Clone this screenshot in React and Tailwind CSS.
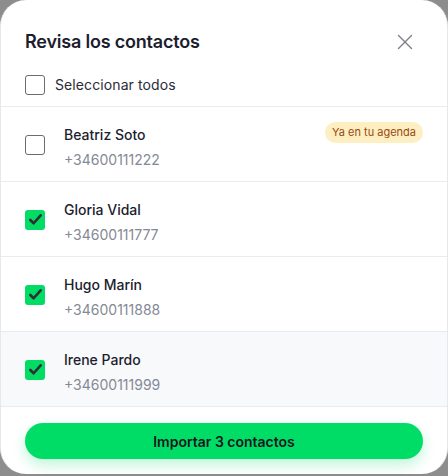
import React, { useState } from "react";

const contacts = [
  { id: 1, name: "Beatriz Soto", phone: "+34600111222", existing: true, checked: false },
  { id: 2, name: "Gloria Vidal", phone: "+34600111777", checked: true },
  { id: 3, name: "Hugo Marín", phone: "+34600111888", checked: true },
  { id: 4, name: "Irene Pardo", phone: "+34600111999", checked: true, hover: true },
];

function Check({ checked }) {
  return checked ? (
    <div className="w-5 h-5 rounded-[3px] bg-[#00dc64] flex items-center justify-center">
      <svg viewBox="0 0 16 16" className="w-[15px] h-[15px]" fill="none">
        <path d="M2.5 8.5l3.5 3.5 7.5-8.5" stroke="#303036" strokeWidth="2.8" strokeLinecap="round" strokeLinejoin="round" />
      </svg>
    </div>
  ) : (
    <div className="w-5 h-5 rounded-[3px] border border-[#6b6b72] bg-white" />
  );
}

export default function App() {
  const [list] = useState(contacts);
  const count = list.filter((c) => c.checked).length;

  return (
    <div className="w-[448px] h-[476px] bg-[#8d8d8d] overflow-hidden" style={{ fontFamily: "Inter, 'Noto Sans', sans-serif" }}>
      <div className="w-[448px] h-[474px] bg-white rounded-[26px] border-x border-[#e6e8ec] flex flex-col">
        <div className="flex items-center justify-between pl-6 pr-[34px] pt-[30px]">
          <h2 className="text-[18px] leading-6 font-semibold text-[#1c1d2e] tracking-[-0.2px]">Revisa los contactos</h2>
          <svg viewBox="0 0 16 16" className="w-4 h-4" fill="none" stroke="#7b7f8a" strokeWidth="1.4" strokeLinecap="round">
            <path d="M1.5 1.5l13 13M14.5 1.5l-13 13" />
          </svg>
        </div>
        <div className="flex items-center gap-[10px] pl-6 pt-[20px] pb-[11px] border-b border-[#e9ebef]">
          <Check checked={false} />
          <span className="text-[14px] text-[#2a2b3a] tracking-[0.1px]">Seleccionar todos</span>
        </div>
        {list.map((c) => (
          <div key={c.id} className={`flex items-center h-[75px] pl-6 pr-6 border-b border-[#e9ebef] ${c.hover ? "bg-[#f8f9fb]" : ""}`}>
            <div className="pt-[1px]"><Check checked={c.checked} /></div>
            <div className="flex-1 ml-[19px] mt-[7px]">
              <div className="text-[14px] leading-5 font-medium text-[#1c1d2e]">{c.name}</div>
              <div className="text-[14px] leading-5 text-[#858995] mt-[5px]">{c.phone}</div>
            </div>
            {c.existing && (
              <span className="self-start mt-[15px] px-[7px] h-[21px] flex items-center rounded-full bg-[#fdefc2] text-[11px] text-[#9a4a12]">Ya en tu agenda</span>
            )}
          </div>
        ))}
        <div className="px-6 pt-[16px]">
          <button className="w-full h-[36px] rounded-full bg-[#00dd66] text-[14px] font-semibold text-[#17181f] shadow-[0_6px_14px_rgba(0,221,102,0.25)]">
            Importar {count} contactos
          </button>
        </div>
      </div>
    </div>
  );
}
